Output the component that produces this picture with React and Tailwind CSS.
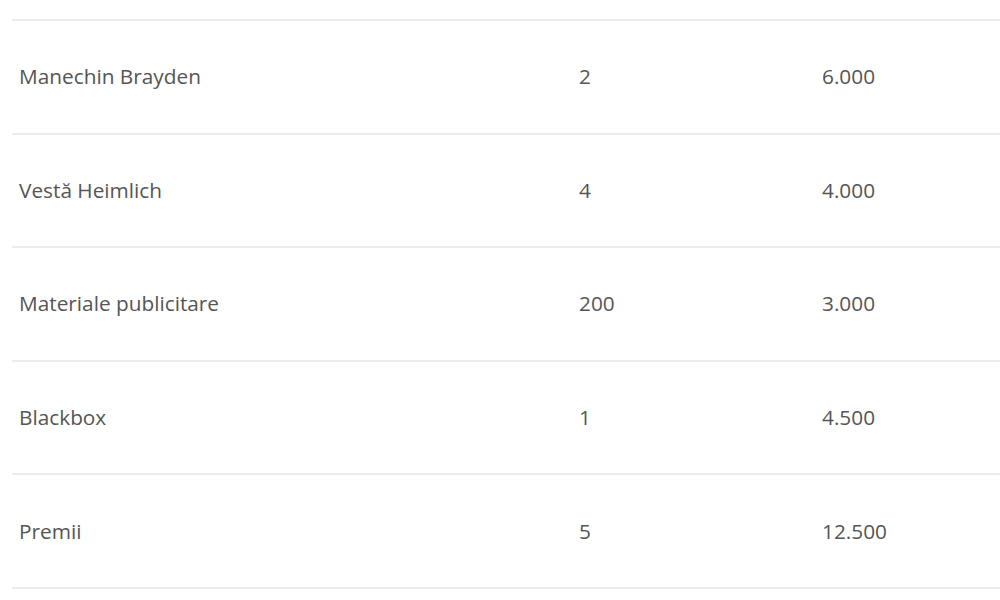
export default function App() {
  const rows = [
    ["Manechin Brayden", "2", "6.000"],
    ["Vestă Heimlich", "4", "4.000"],
    ["Materiale publicitare", "200", "3.000"],
    ["Blackbox", "1", "4.500"],
    ["Premii", "5", "12.500"],
  ];
  return (
    <div className="w-[1000px] h-[600px] bg-white overflow-hidden pt-[19px] pl-[12px]" style={{ fontFamily: '"Open Sans", sans-serif' }}>
      <div className="w-[1000px] border-t-2 border-[#ececec]">
        {rows.map((r, i) => (
          <div key={i} className="grid grid-cols-[560px_243px_1fr] items-center h-[113.6px] border-b-2 border-[#ececec] text-[20.8px] text-[#555555]">
            <div className="pl-[7px]">{r[0]}</div>
            <div className="pl-[7px]">{r[1]}</div>
            <div className="pl-[7px]">{r[2]}</div>
          </div>
        ))}
      </div>
    </div>
  );
}
